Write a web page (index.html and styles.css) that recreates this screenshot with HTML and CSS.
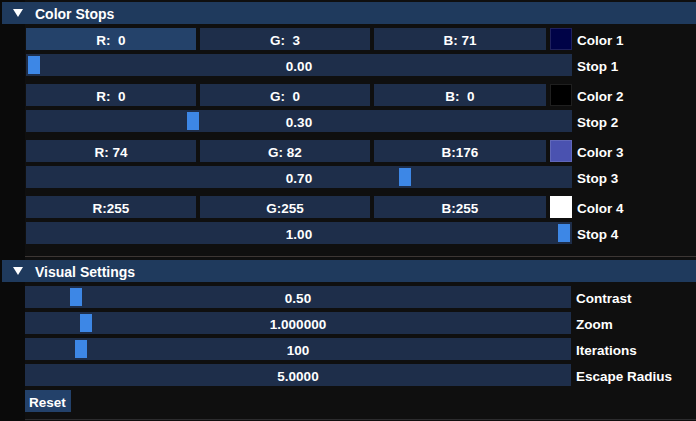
FILE: index.html
```html
<!DOCTYPE html>
<html>
<head>
<meta charset="utf-8">
<link rel="stylesheet" href="styles.css">
</head>
<body>
<div class="page">
  <div class="header"><span class="arrow"></span><span class="htitle">Color Stops</span></div>
  <div class="section stops">
    <div class="group">
      <div class="color-row">
        <div class="field active">R:  0</div>
        <div class="field">G:  3</div>
        <div class="field">B: 71</div>
        <div class="swatch" style="background:#000347"></div>
        <div class="label">Color 1</div>
      </div>
      <div class="slider-row">
        <div class="slider"><span class="grab" style="left:2px"></span><span class="val">0.00</span></div>
        <div class="label">Stop 1</div>
      </div>
    </div>
    <div class="group">
      <div class="color-row">
        <div class="field">R:  0</div>
        <div class="field">G:  0</div>
        <div class="field">B:  0</div>
        <div class="swatch" style="background:#000000"></div>
        <div class="label">Color 2</div>
      </div>
      <div class="slider-row">
        <div class="slider"><span class="grab" style="left:161px"></span><span class="val">0.30</span></div>
        <div class="label">Stop 2</div>
      </div>
    </div>
    <div class="group">
      <div class="color-row">
        <div class="field">R: 74</div>
        <div class="field">G: 82</div>
        <div class="field">B:176</div>
        <div class="swatch" style="background:#4a52b0"></div>
        <div class="label">Color 3</div>
      </div>
      <div class="slider-row">
        <div class="slider"><span class="grab" style="left:373px"></span><span class="val">0.70</span></div>
        <div class="label">Stop 3</div>
      </div>
    </div>
    <div class="group">
      <div class="color-row">
        <div class="field">R:255</div>
        <div class="field">G:255</div>
        <div class="field">B:255</div>
        <div class="swatch" style="background:#ffffff"></div>
        <div class="label">Color 4</div>
      </div>
      <div class="slider-row">
        <div class="slider"><span class="grab" style="left:532px"></span><span class="val">1.00</span></div>
        <div class="label">Stop 4</div>
      </div>
    </div>
  </div>
  <div class="separator"></div>
  <div class="header header2"><span class="arrow"></span><span class="htitle">Visual Settings</span></div>
  <div class="section visual">
    <div class="slider-row">
      <div class="slider"><span class="grab" style="left:45px"></span><span class="val">0.50</span></div>
      <div class="label">Contrast</div>
    </div>
    <div class="slider-row">
      <div class="slider"><span class="grab" style="left:55px"></span><span class="val">1.000000</span></div>
      <div class="label">Zoom</div>
    </div>
    <div class="slider-row">
      <div class="slider"><span class="grab" style="left:50px"></span><span class="val">100</span></div>
      <div class="label">Iterations</div>
    </div>
    <div class="slider-row">
      <div class="slider"><span class="val">5.0000</span></div>
      <div class="label">Escape Radius</div>
    </div>
    <div class="btn-row"><div class="button">Reset</div></div>
  </div>
  <div class="bottom-line"></div>
</div>
</body>
</html>
```
FILE: styles.css
```css
html, body {
  margin: 0;
  padding: 0;
  background: #0f0f0f;
}
.page {
  width: 696px;
  height: 421px;
  overflow: hidden;
  box-sizing: border-box;
  padding-top: 2px;
  background: linear-gradient(to right, #0a0a0a 0, #0a0a0a 25px, #0f0f0f 25px);
  font-family: "Liberation Sans", Arial, sans-serif;
  font-weight: bold;
  font-size: 13.5px;
  color: #ffffff;
}
.header {
  margin-left: 2px;
  height: 22px;
  background: #1f3a5d;
  display: flex;
  align-items: center;
  padding-left: 11px;
  gap: 12px;
  font-size: 14px;
}
.arrow {
  width: 0;
  height: 0;
  border-left: 5px solid transparent;
  border-right: 5px solid transparent;
  border-top: 8px solid #ffffff;
}
.htitle {
  line-height: 22px;
  padding-top: 2px;
}
.section {
  display: flex;
  flex-direction: column;
}
.stops {
  margin-top: 4px;
  padding-left: 26px;
  gap: 8px;
}
.group {
  display: flex;
  flex-direction: column;
  gap: 4px;
}
.color-row {
  display: grid;
  grid-template-columns: 170px 170px 172px 22px auto;
  column-gap: 4px;
  height: 22px;
}
.field {
  background: #1e2e4a;
  text-align: center;
  height: 22px;
  line-height: 25px;
  white-space: pre;
  overflow: hidden;
}
.field.active {
  background: #24426a;
}
.swatch {
  width: 22px;
  height: 22px;
  box-sizing: border-box;
  border: 1px solid rgba(255,255,255,0.12);
}
.label {
  height: 22px;
  line-height: 25px;
  padding-left: 1px;
  white-space: nowrap;
}
.slider-row {
  display: flex;
  gap: 4px;
  height: 22px;
}
.slider {
  position: relative;
  width: 546px;
  height: 22px;
  background: #1e2e4a;
  text-align: center;
  line-height: 25px;
  overflow: hidden;
}
.grab {
  position: absolute;
  top: 2px;
  width: 12px;
  height: 18px;
  background: #3d87e6;
}
.val {
  position: relative;
}
.separator {
  margin-top: 12px;
  margin-left: 25px;
  height: 1px;
  background: #3c3634;
}
.header2 {
  margin-top: 3px;
}
.visual {
  margin-top: 4px;
  padding-left: 25px;
  gap: 4px;
}
.btn-row {
  display: flex;
}
.button {
  background: #23416a;
  height: 22px;
  line-height: 25px;
  padding: 0 5px 0 4px;
  overflow: hidden;
}
.bottom-line {
  margin-top: 7px;
  margin-left: 25px;
  height: 1px;
  background: #2c2c2e;
}
```
